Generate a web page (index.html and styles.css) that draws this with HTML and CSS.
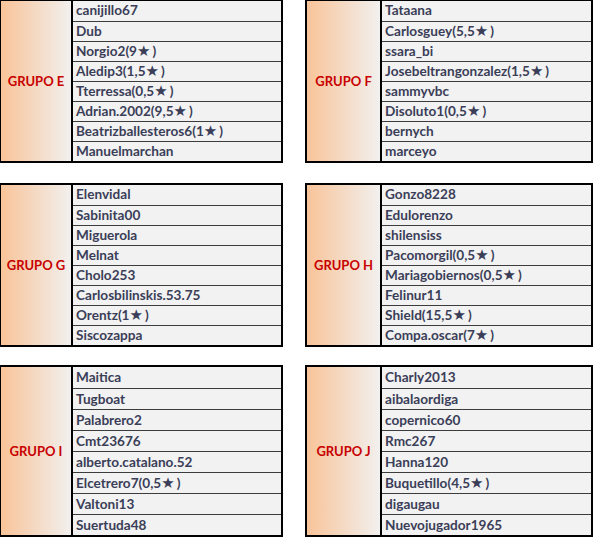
FILE: index.html
```html
<!DOCTYPE html>
<html lang="es">
<head>
<meta charset="utf-8">
<title>Grupos</title>
<link rel="stylesheet" href="styles.css">
</head>
<body>
<div class="page">
  <div class="band band-1">
    <div class="group g-left">
      <div class="label">GRUPO E</div>
      <div class="list">
        <div class="row">canijillo67</div>
        <div class="row">Dub</div>
        <div class="row">Norgio2(9<span class="star">★</span>)</div>
        <div class="row">Aledip3(1,5<span class="star">★</span>)</div>
        <div class="row">Tterressa(0,5<span class="star">★</span>)</div>
        <div class="row">Adrian.2002(9,5<span class="star">★</span>)</div>
        <div class="row">Beatrizballesteros6(1<span class="star">★</span>)</div>
        <div class="row">Manuelmarchan</div>
      </div>
    </div>
    <div class="group g-right">
      <div class="label">GRUPO F</div>
      <div class="list">
        <div class="row">Tataana</div>
        <div class="row">Carlosguey(5,5<span class="star">★</span>)</div>
        <div class="row">ssara_bi</div>
        <div class="row">Josebeltrangonzalez(1,5<span class="star">★</span>)</div>
        <div class="row">sammyvbc</div>
        <div class="row">Disoluto1(0,5<span class="star">★</span>)</div>
        <div class="row">bernych</div>
        <div class="row">marceyo</div>
      </div>
    </div>
  </div>
  <div class="band band-2">
    <div class="group g-left">
      <div class="label">GRUPO G</div>
      <div class="list">
        <div class="row">Elenvidal</div>
        <div class="row">Sabinita00</div>
        <div class="row">Miguerola</div>
        <div class="row">Melnat</div>
        <div class="row">Cholo253</div>
        <div class="row">Carlosbilinskis.53.75</div>
        <div class="row">Orentz(1<span class="star">★</span>)</div>
        <div class="row">Siscozappa</div>
      </div>
    </div>
    <div class="group g-right">
      <div class="label">GRUPO H</div>
      <div class="list">
        <div class="row">Gonzo8228</div>
        <div class="row">Edulorenzo</div>
        <div class="row">shilensiss</div>
        <div class="row">Pacomorgil(0,5<span class="star">★</span>)</div>
        <div class="row">Mariagobiernos(0,5<span class="star">★</span>)</div>
        <div class="row">Felinur11</div>
        <div class="row">Shield(15,5<span class="star">★</span>)</div>
        <div class="row">Compa.oscar(7<span class="star">★</span>)</div>
      </div>
    </div>
  </div>
  <div class="band band-3">
    <div class="group g-left tall">
      <div class="label">GRUPO I</div>
      <div class="list">
        <div class="row">Maitica</div>
        <div class="row">Tugboat</div>
        <div class="row">Palabrero2</div>
        <div class="row">Cmt23676</div>
        <div class="row">alberto.catalano.52</div>
        <div class="row">Elcetrero7(0,5<span class="star">★</span>)</div>
        <div class="row">Valtoni13</div>
        <div class="row">Suertuda48</div>
      </div>
    </div>
    <div class="group g-right tall">
      <div class="label">GRUPO J</div>
      <div class="list">
        <div class="row">Charly2013</div>
        <div class="row">aibalaordiga</div>
        <div class="row">copernico60</div>
        <div class="row">Rmc267</div>
        <div class="row">Hanna120</div>
        <div class="row">Buquetillo(4,5<span class="star">★</span>)</div>
        <div class="row">digaugau</div>
        <div class="row">Nuevojugador1965</div>
      </div>
    </div>
  </div>
</div>
</body>
</html>
```

FILE: styles.css
```css
html, body {
  margin: 0;
  padding: 0;
  background: #ffffff;
}

.page {
  width: 593px;
  margin-top: -1px;
  display: flex;
  flex-direction: column;
  font-family: "Lato", "Open Sans", sans-serif;
}

.band {
  display: flex;
  align-items: flex-start;
  gap: 22px;
}

.band-1 { margin-bottom: 20px; }
.band-2 { margin-bottom: 18px; }

.group {
  display: flex;
  border: 2px solid #000;
  background: #f2f2f2;
}

.g-left { width: 284px; margin-left: -1px; }
.g-right { width: 288px; }

.label {
  flex: none;
  width: 70px;
  border-right: 2px solid #000;
  background: linear-gradient(to right, #f9c499 0%, #f4dcc8 55%, #f2f0ee 100%);
  display: flex;
  align-items: center;
  justify-content: center;
  color: #c80000;
  font-weight: 700;
  font-size: 13px;
}

.g-right .label { width: 73px; }

.list {
  flex: 1;
  display: flex;
  flex-direction: column;
}

.row {
  height: 19px;
  line-height: 19px;
  padding-left: 3px;
  border-top: 1px solid #3c3c3c;
  color: #3b3e58;
  font-weight: 700;
  font-size: 13.6px;
  white-space: nowrap;
  overflow: hidden;
}

.row:first-child {
  border-top: none;
  height: 20px;
}

.tall .row { height: 20px; line-height: 20px; }
.tall .row:first-child { height: 21px; }

.star {
  font-family: "DejaVu Sans", sans-serif;
  font-size: 15px;
  padding-right: 2px;
}
```
